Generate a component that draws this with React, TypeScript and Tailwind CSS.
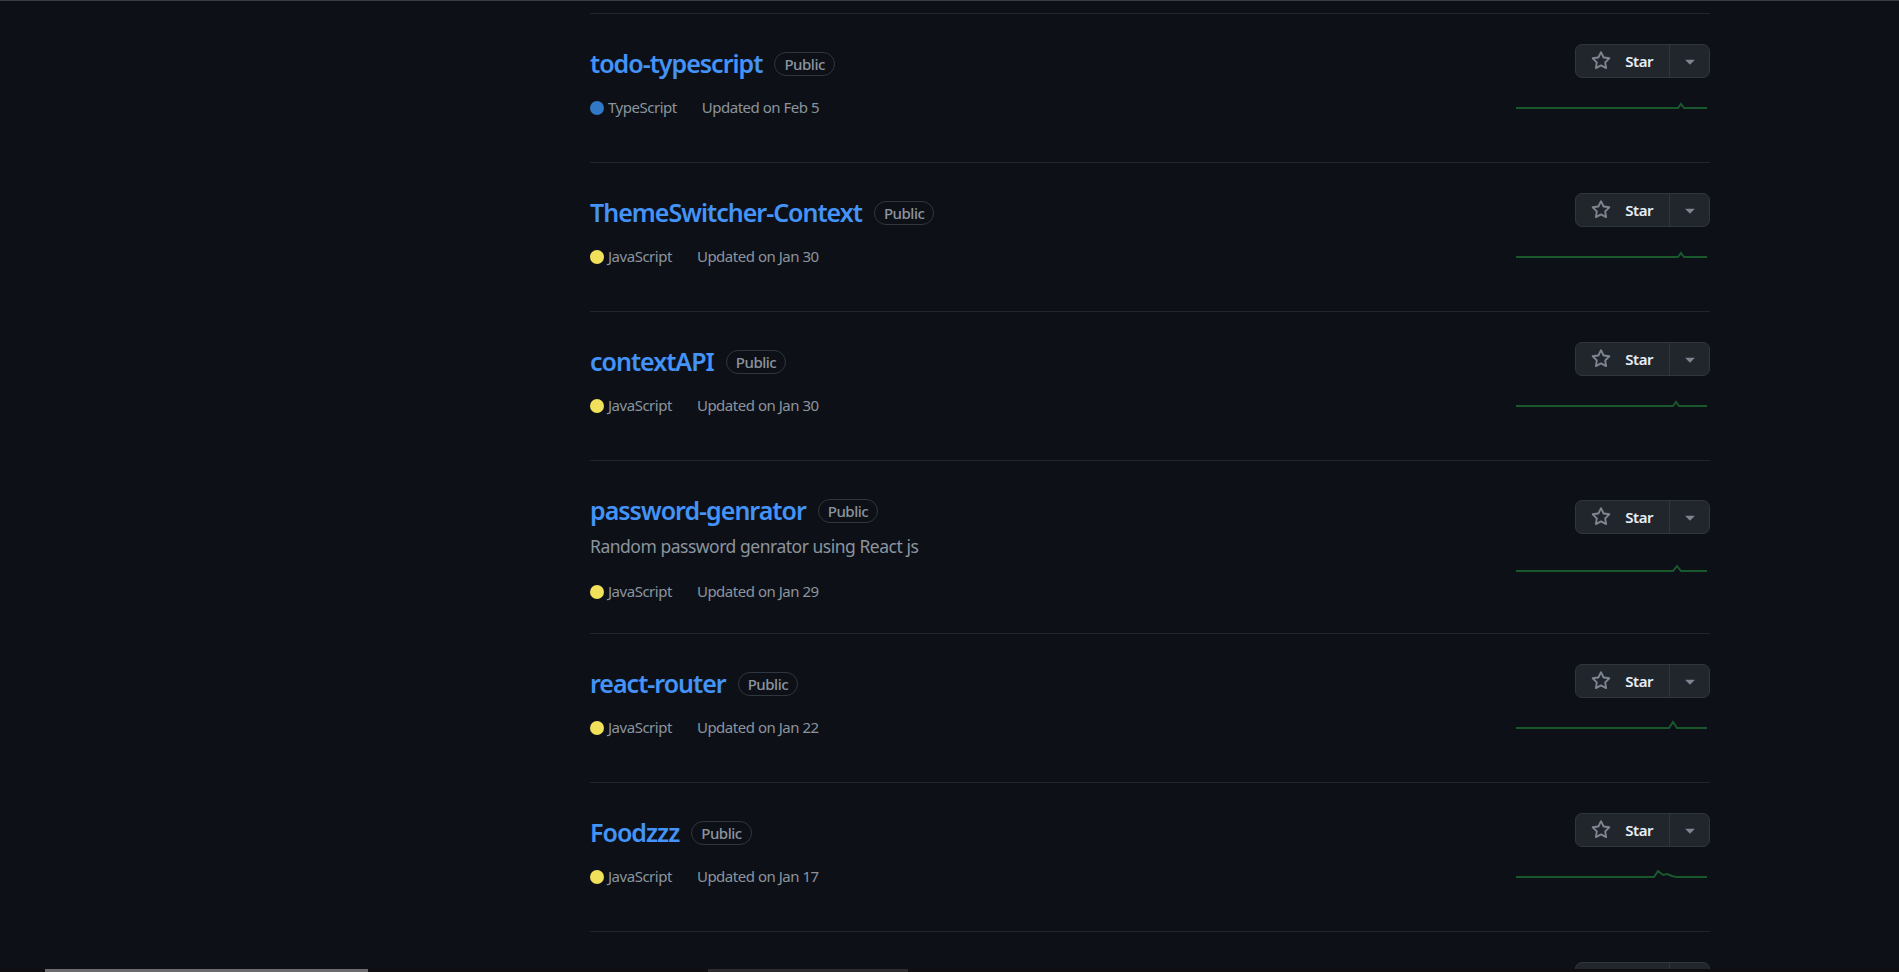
import { useState } from 'react';

interface Repo {
  name: string;
  description?: string;
  language: 'TypeScript' | 'JavaScript';
  updated: string;
  // sparkline points after the flat baseline, x in px from the left
  spark: Array<[number, number]>;
}

const repos: Repo[] = [
  { name: 'todo-typescript', language: 'TypeScript', updated: 'Updated on Feb 5', spark: [[162, 26], [165, 22], [168, 26]] },
  { name: 'ThemeSwitcher-Context', language: 'JavaScript', updated: 'Updated on Jan 30', spark: [[162, 26], [165, 22], [168, 26]] },
  { name: 'contextAPI', language: 'JavaScript', updated: 'Updated on Jan 30', spark: [[157, 26], [160, 22], [163, 26]] },
  {
    name: 'password-genrator',
    description: 'Random password genrator using React js',
    language: 'JavaScript',
    updated: 'Updated on Jan 29',
    spark: [[157, 26], [161, 21], [165, 26]],
  },
  { name: 'react-router', language: 'JavaScript', updated: 'Updated on Jan 22', spark: [[153, 26], [157, 20], [161, 26]] },
  { name: 'Foodzzz', language: 'JavaScript', updated: 'Updated on Jan 17', spark: [[138, 26], [142, 20], [147, 24], [151, 23], [156, 25], [160, 26]] },
  { name: 'Bookstore', language: 'JavaScript', updated: 'Updated on Jan 12', spark: [[150, 26], [154, 22], [158, 26]] },
];

const langColor: Record<Repo['language'], string> = {
  TypeScript: 'bg-[#3178c6]',
  JavaScript: 'bg-[#f1e05a]',
};

function StarIcon() {
  return (
    <svg width="20" height="20" viewBox="0 0 16 16" fill="#7d8590">
      <path d="M8 .25a.75.75 0 0 1 .673.418l1.882 3.815 4.21.612a.75.75 0 0 1 .416 1.279l-3.046 2.97.719 4.192a.751.751 0 0 1-1.088.791L8 12.347l-3.766 1.98a.75.75 0 0 1-1.088-.79l.72-4.194L.818 6.374a.75.75 0 0 1 .416-1.28l4.21-.611L7.327.668A.75.75 0 0 1 8 .25Zm0 2.445L6.615 5.5a.75.75 0 0 1-.564.41l-3.097.45 2.24 2.184a.75.75 0 0 1 .216.664l-.528 3.084 2.769-1.456a.75.75 0 0 1 .698 0l2.77 1.456-.53-3.084a.75.75 0 0 1 .216-.664l2.24-2.183-3.096-.45a.75.75 0 0 1-.564-.41L8 2.694Z" />
    </svg>
  );
}

function CaretIcon() {
  return (
    <svg width="20" height="20" viewBox="0 0 16 16" fill="#7d8590">
      <path d="m4.427 7.427 3.396 3.396a.25.25 0 0 0 .354 0l3.396-3.396A.25.25 0 0 0 11.396 7H4.604a.25.25 0 0 0-.177.427Z" />
    </svg>
  );
}

function Sparkline({ points }: { points: Array<[number, number]> }) {
  const all: Array<[number, number]> = [[0, 26], ...points, [191, 26]];
  const d = all.map(([x, y], i) => `${i === 0 ? 'M' : 'L'}${x} ${y}`).join(' ');
  return (
    <svg width="194" height="30" className="block">
      <path d={d} fill="none" stroke="#19572c" strokeWidth="2" strokeLinejoin="miter" />
    </svg>
  );
}

function RepoRow({ repo }: { repo: Repo }) {
  const [starred, setStarred] = useState(false);
  const hasDesc = !!repo.description;

  return (
    <li className="flex border-t border-[#21262d] py-[30px]">
      <div className="flex-1 min-h-[88px]">
        <div className="flex items-center h-[37px] pt-[1px]">
          <a href="#" className="text-[25px] leading-[37px] font-semibold tracking-[-0.04em] text-[#4493f8]">
            {repo.name}
          </a>
          <span className="ml-[12px] mt-[2px] h-[24px] px-[9px] flex items-center rounded-full border border-[#30363d] text-[15px] font-medium text-[#8b949e]">
            Public
          </span>
        </div>
        {hasDesc && (
          <p className="mt-[5px] text-[17.5px] leading-[27px] text-[#8b949e]">{repo.description}</p>
        )}
        <div className={`flex items-center text-[15px] leading-[23px] text-[#8b949e] ${hasDesc ? 'mt-[20px]' : 'mt-[15px]'}`}>
          <span className="flex items-center mr-[25px]">
            <span className={`inline-block w-[14px] h-[14px] rounded-full mr-[4px] ${langColor[repo.language]}`} />
            {repo.language}
          </span>
          <span>{repo.updated}</span>
        </div>
      </div>

      <div className={`flex flex-col items-end ${hasDesc ? 'pt-[9px]' : ''}`}>
        <div className="flex h-[34px] rounded-[7px] border border-[#30363d] bg-[#21262d]">
          <button
            onClick={() => setStarred(!starred)}
            className="flex items-center gap-[14px] pl-[15px] pr-[16px] border-r border-[#30363d] text-[15px] font-semibold text-[#e6edf3]"
          >
            <StarIcon />
            {starred ? 'Starred' : 'Star'}
          </button>
          <button className="flex items-center justify-center w-[39px]">
            <CaretIcon />
          </button>
        </div>
        <div className={hasDesc ? 'mt-[11px]' : 'mt-[4px]'}>
          <Sparkline points={repo.spark} />
        </div>
      </div>
    </li>
  );
}

export default function App() {
  return (
    <div
      className="h-[972px] flex flex-col overflow-hidden bg-[#0d1117] tracking-[-0.03em]"
      style={{ fontFamily: '"Noto Sans", "Open Sans", sans-serif' }}
    >
      <div className="h-px shrink-0 bg-[#3a3d41]" />
      <div className="flex-1 overflow-hidden flex pt-[12px]">
        <aside className="w-[590px] shrink-0" />
        <main className="w-[1120px] shrink-0">
          <ul>
            {repos.map((r) => (
              <RepoRow key={r.name} repo={r} />
            ))}
          </ul>
        </main>
      </div>
      {/* bottom scrollbar strip */}
      <div className="h-[3px] shrink-0 flex items-stretch bg-[#0f0f10]">
        <div className="ml-[45px] w-[323px] bg-[#6b6b6b]" />
        <div className="ml-[340px] w-[200px] bg-[#2c2c2e]" />
      </div>
    </div>
  );
}
